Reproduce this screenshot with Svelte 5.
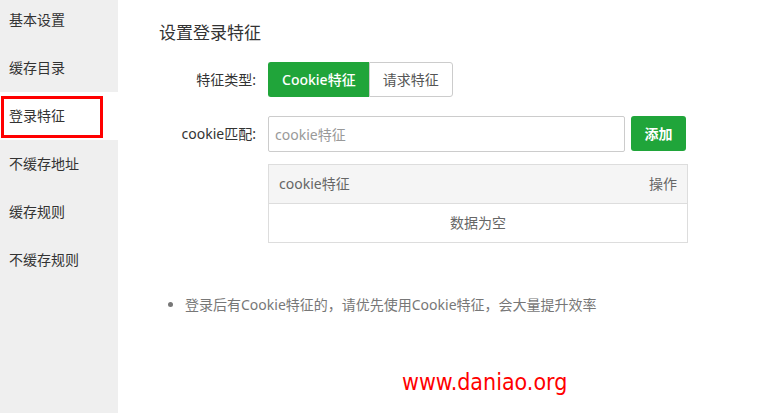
<script>
  const menu = ['基本设置', '缓存目录', '登录特征', '不缓存地址', '缓存规则', '不缓存规则'];
  let active = $state('登录特征');
  const types = ['Cookie特征', '请求特征'];
  let type = $state('Cookie特征');
  let keyword = $state('');
</script>

<div class="page">
  <nav class="side">
    <ul>
      {#each menu as item}
        <li>
          <button class="item" class:active={item === active} onclick={() => (active = item)}>{item}</button>
        </li>
      {/each}
    </ul>
  </nav>

  <main>
    <h1>设置登录特征</h1>

    <div class="row">
      <span class="label" id="type-label">特征类型:</span>
      <div class="group" role="group" aria-labelledby="type-label">
        {#each types as t}
          <button class="toggle" class:on={t === type} aria-pressed={t === type} onclick={() => (type = t)}>{t}</button>
        {/each}
      </div>
    </div>

    <div class="row">
      <label class="label" for="cookie">cookie匹配:</label>
      <div class="field">
        <input id="cookie" type="text" placeholder="cookie特征" bind:value={keyword} />
        <button class="add">添加</button>
      </div>
    </div>

    <div class="list">
      <table>
        <thead>
          <tr><th>cookie特征</th><th class="op">操作</th></tr>
        </thead>
        <tbody>
          <tr><td colspan="2">数据为空</td></tr>
        </tbody>
      </table>
    </div>

    <ul class="tips">
      <li>登录后有Cookie特征的，请优先使用Cookie特征，会大量提升效率</li>
    </ul>

    <p class="site">www.daniao.org</p>
  </main>
</div>

<style>
  :global(body) {
    margin: 0;
    background: #fff;
  }
  .page {
    display: flex;
    min-height: 100vh;
    overflow: hidden;
    font: 14px/20px "Noto Sans", "Noto Sans CJK SC", sans-serif;
    color: #333;
  }
  .page * {
    box-sizing: border-box;
  }
  button,
  input {
    font: inherit;
    margin: 0;
  }
  .side {
    flex: 0 0 118px;
    background: #efefef;
  }
  .side ul {
    list-style: none;
    margin: -4px 0 0;
    padding: 0;
  }
  .item {
    display: block;
    position: relative;
    width: 100%;
    height: 48px;
    padding: 0 9px;
    border: 0;
    background: none;
    color: #333;
    text-align: left;
  }
  .item.active {
    background: #fff;
  }
  .item.active::after {
    content: "";
    position: absolute;
    inset: 4px 15px 2px 1px;
    border: 3px solid #f00;
  }
  main {
    flex: 1;
    min-width: 0;
    padding: 20px 83px 0 41px;
  }
  h1 {
    margin: 0 0 16px;
    font-size: 17px;
    line-height: 26px;
    font-weight: 400;
  }
  .row {
    display: flex;
    align-items: center;
    gap: 12px;
    margin-bottom: 19px;
  }
  .label {
    flex: 0 0 97px;
    text-align: right;
  }
  .group {
    display: flex;
  }
  .toggle {
    height: 35px;
    padding: 0 13px;
    border: 1px solid #ccc;
    border-radius: 0 3px 3px 0;
    background: #fff;
    color: #555;
  }
  .toggle:first-child {
    border-right: 0;
    border-radius: 3px 0 0 3px;
  }
  .toggle.on {
    border-color: #20a53a;
    background: #20a53a;
    color: #fff;
    font-weight: 500;
  }
  .field {
    flex: 1;
    display: flex;
    gap: 6px;
    margin-right: 2px;
  }
  input {
    flex: 1;
    min-width: 0;
    height: 36px;
    padding: 0 6px;
    border: 1px solid #ccc;
    border-radius: 2px;
    color: #555;
  }
  input::placeholder {
    color: #999;
    opacity: 1;
  }
  .add {
    width: 55px;
    height: 35px;
    padding: 0;
    border: 0;
    border-radius: 3px;
    background: #20a53a;
    color: #fff;
    font-weight: 700;
  }
  .list {
    margin: -7px 0 52px;
    padding-left: 109px;
  }
  table {
    width: 100%;
    border-collapse: collapse;
    border: 1px solid #ddd;
    color: #666;
  }
  th,
  td {
    height: 39px;
    padding: 0 10px;
    font-weight: 400;
    text-align: left;
  }
  th {
    background: #f5f5f5;
    border-bottom: 1px solid #ddd;
  }
  .op {
    text-align: right;
  }
  td {
    text-align: center;
  }
  .tips {
    margin: 0 0 53px;
    padding-left: 26px;
    color: #777;
  }
  .site {
    margin: 0;
    padding-left: 243px;
    font: 23px/28px "DejaVu Sans Condensed", "DejaVu Sans", sans-serif;
    color: #f00;
  }
</style>
